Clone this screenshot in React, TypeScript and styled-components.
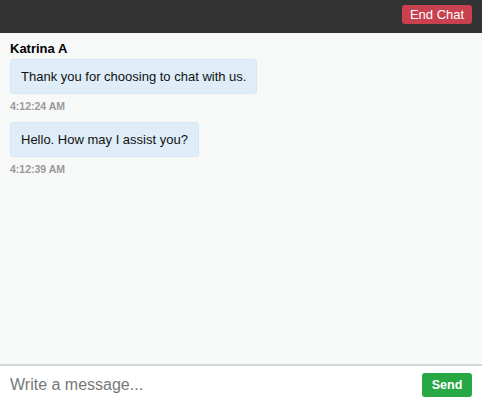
import React from "react";
import styled, { createGlobalStyle } from "styled-components";

const Global = createGlobalStyle`
  html, body { margin: 0; padding: 0; height: 100%; }
  body { font-family: Arial, "Liberation Sans", sans-serif; }
  #root { height: 100%; }
`;

const Wrap = styled.div`
  display: flex;
  flex-direction: column;
  height: 404px;
  width: 482px;
  background: #f7f8f8;
`;

const Header = styled.div`
  height: 33px;
  background: #333333;
  display: flex;
  align-items: flex-start;
  justify-content: flex-end;
  padding: 5px 10px 0 0;
  box-sizing: border-box;
`;

const Btn = styled.button<{ $bg: string }>`
  border: none;
  background: ${(p) => p.$bg};
  color: #fff;
  font-family: Arial, "Liberation Sans", sans-serif;
  border-radius: 3px;
  cursor: pointer;
`;

const EndBtn = styled(Btn)`
  height: 19px;
  width: 70px;
  padding: 0;
  font-size: 13px;
  line-height: 19px;
`;

const SendBtn = styled(Btn)`
  height: 24px;
  width: 50px;
  padding: 0;
  font-size: 12.5px;
  font-weight: bold;
`;

const Messages = styled.div`
  flex: 1;
  padding: 8px 10px;
  display: flex;
  flex-direction: column;
  align-items: flex-start;
`;

const Name = styled.div`
  font-weight: bold;
  font-size: 13px;
  color: #000;
  line-height: 16px;
  margin-bottom: 2px;
`;

const Bubble = styled.div`
  background: #deedf8;
  border: 1px solid #d8e7f3;
  border-radius: 3px;
  padding: 0 10px;
  height: 33px;
  display: flex;
  align-items: center;
  font-size: 13px;
  color: #111;
`;

const Time = styled.div`
  font-size: 10.5px;
  font-weight: bold;
  color: #999;
  margin-top: 6px;
  margin-bottom: 10px;
  line-height: 12px;
`;

const Footer = styled.div`
  height: 40px;
  border-top: 2px solid #d4d8dd;
  background: #fff;
  display: flex;
  align-items: center;
  padding: 0 10px;
  box-sizing: border-box;
`;

const Input = styled.input`
  flex: 1;
  border: none;
  outline: none;
  font-size: 16px;
  font-family: Arial, "Liberation Sans", sans-serif;
  padding: 0;
  color: #333;
  &::placeholder { color: #777; }
`;

export default function App() {
  return (
    <Wrap>
      <Global />
      <Header>
        <EndBtn $bg="#c9404f">End Chat</EndBtn>
      </Header>
      <Messages>
        <Name>Katrina A</Name>
        <Bubble>Thank you for choosing to chat with us.</Bubble>
        <Time>4:12:24 AM</Time>
        <Bubble>Hello. How may I assist you?</Bubble>
        <Time>4:12:39 AM</Time>
      </Messages>
      <Footer>
        <Input placeholder="Write a message..." />
        <SendBtn $bg="#28a745">Send</SendBtn>
      </Footer>
    </Wrap>
  );
}
